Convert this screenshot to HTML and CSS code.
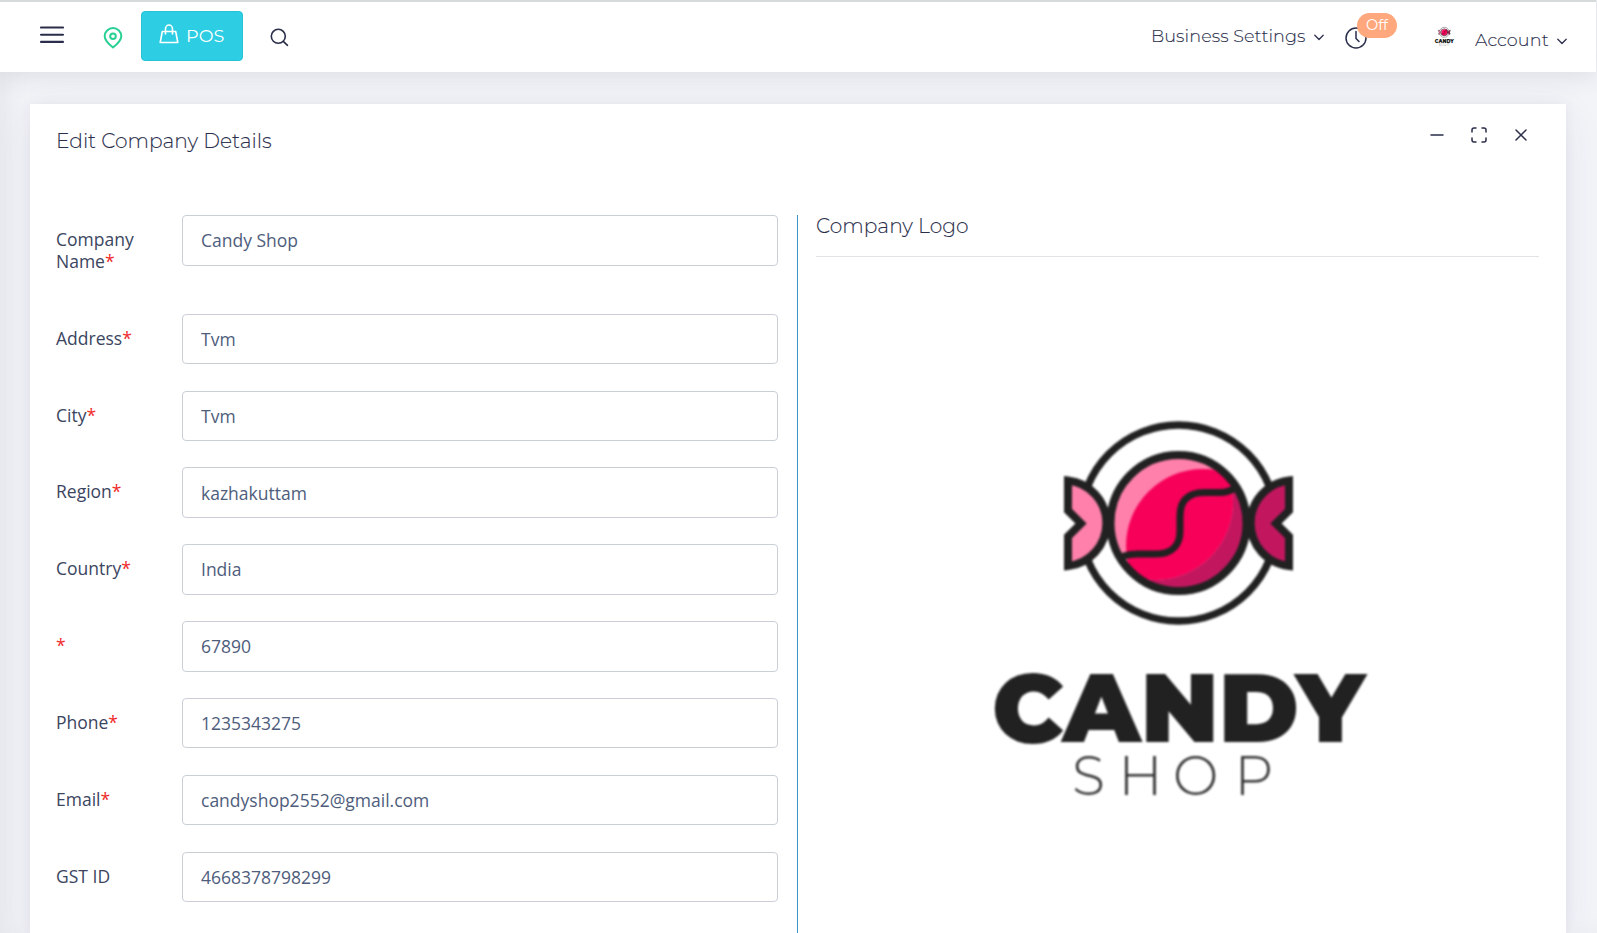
FILE: index.html
```html
<!DOCTYPE html>
<html lang="en">
<head>
<meta charset="utf-8">
<title>Edit Company Details</title>
<link rel="stylesheet" href="styles.css">
</head>
<body>
<svg class="defs" width="0" height="0">
  <defs>
    <clipPath id="candy-core"><circle cx="1155" cy="502" r="78"/></clipPath>
    <clipPath id="candy-ball"><circle cx="1178.5" cy="523" r="68"/></clipPath>
    <symbol id="candy-logo" viewBox="816 280 724 653">
      <g stroke="#212121" stroke-width="8" stroke-linejoin="miter">
        <circle cx="1178.5" cy="523" r="98" fill="none" stroke-width="7.5"/>
        <path d="M1068 480.500A43 43 0 0 1 1068 566V536.500L1081 523.500L1068 510.500Z" fill="#ff80ab"/>
        <path d="M1289 480.500A43 43 0 0 0 1289 566V536.500L1276 523.500L1289 510.500Z" fill="#c2175f"/>
      </g>
      <g clip-path="url(#candy-ball)">
        <rect x="1108" y="453" width="142" height="142" fill="#c2175f"/>
        <circle cx="1155" cy="502" r="78" fill="#ff80ab"/>
        <circle cx="1203" cy="546" r="77" fill="#f70059" clip-path="url(#candy-core)"/>
      </g>
      <circle cx="1178.500" cy="523" r="68" fill="none" stroke="#212121" stroke-width="8"/>
      <path d="M1124 556Q1130 554 1138 554H1156C1173 554 1180 544 1180 531V516C1180 502 1187 492.500 1204 492.500H1220Q1228 492.500 1235 488" fill="none" stroke="#212121" stroke-width="7"/>
      <text class="logo-candy" x="992" y="741.500" textLength="373" lengthAdjust="spacingAndGlyphs">CANDY</text>
      <text class="logo-shop" x="1072 1118.500 1173 1234.500" y="794.500">SHOP</text>
    </symbol>
  </defs>
</svg>

<header class="navbar">
  <div class="nav-left">
    <svg class="menu" viewBox="0 0 24 18"><path d="M1 1.500H23M1 8.700H23M1 15.900H23"/></svg>
    <svg class="pin" viewBox="0 0 20 22"><path d="M10 20.500C7.500 18.500 1.700 14 1.700 9.300A8.300 8.200 0 0 1 18.300 9.300C18.300 14 12.500 18.500 10 20.500Z"/><circle cx="10" cy="9.300" r="2.800"/></svg>
    <a class="pos" href="#">
      <svg viewBox="0 0 20 20"><path d="M3.300 7.500H16.700L18.800 18.500H1.200ZM6.500 10V5A3.500 4 0 0 1 13.500 5V10"/></svg>
      <span>POS</span>
    </a>
    <svg class="search" viewBox="0 0 19 19"><circle cx="8.300" cy="8.300" r="7"/><path d="M13.300 13.300L17.500 17.300"/></svg>
  </div>
  <div class="nav-right">
    <a class="business" href="#"><span>Business Settings</span><svg class="chev" viewBox="0 0 10 7"><path d="M.8 1.200L5 5.500L9.200 1.200"/></svg></a>
    <div class="clock">
      <svg viewBox="0 0 22 22"><circle cx="11" cy="11" r="10"/><path d="M11 4.500V11.500L14 14.500"/></svg>
      <span class="badge">Off</span>
    </div>
    <svg class="avatar" viewBox="140 120 450 410"><use href="#candy-logo" width="724" height="653"/></svg>
    <a class="account" href="#"><span>Account</span><svg class="chev" viewBox="0 0 10 7"><path d="M.8 1.200L5 5.500L9.200 1.200"/></svg></a>
  </div>
</header>

<main class="card">
  <div class="card-head">
    <h1>Edit Company Details</h1>
    <div class="tools">
      <svg viewBox="0 0 16 16"><path d="M2 8H14"/></svg>
      <svg viewBox="0 0 16 16"><path d="M1 5V3Q1 1 3 1H5M11 1H13Q15 1 15 3V5M15 11V13Q15 15 13 15H11M5 15H3Q1 15 1 13V11"/></svg>
      <svg viewBox="0 0 16 16"><path d="M3 3L13 13M13 3L3 13"/></svg>
    </div>
  </div>
  <div class="columns">
    <form class="fields">
      <div class="row tall"><label>Company Name<b>*</b></label><input value="Candy Shop"></div>
      <div class="row"><label>Address<b>*</b></label><input value="Tvm"></div>
      <div class="row"><label>City<b>*</b></label><input value="Tvm"></div>
      <div class="row"><label>Region<b>*</b></label><input value="kazhakuttam"></div>
      <div class="row"><label>Country<b>*</b></label><input value="India"></div>
      <div class="row"><label><b>*</b></label><input value="67890"></div>
      <div class="row"><label>Phone<b>*</b></label><input value="1235343275"></div>
      <div class="row"><label>Email<b>*</b></label><input value="candyshop2552@gmail.com"></div>
      <div class="row"><label>GST ID</label><input value="4668378798299"></div>
    </form>
    <section class="logo-panel">
      <h2>Company Logo</h2>
      <svg class="logo" viewBox="0 0 724 653"><use href="#candy-logo" width="724" height="653"/></svg>
    </section>
  </div>
</main>
</body>
</html>
```
FILE: styles.css
```css
* { box-sizing: border-box; }
body {
  margin: 0;
  height: 933px;
  overflow: hidden;
  background: #f3f4f8;
  box-shadow: inset 14px 0 24px -8px rgba(60, 60, 80, .08);
  font-family: "Open Sans", sans-serif;
  font-size: 17.5px;
  color: #404e67;
}
.defs { position: absolute; }
svg { display: block; fill: none; stroke-linecap: round; stroke-linejoin: round; flex: none; }
a { color: inherit; text-decoration: none; }

.navbar {
  display: flex;
  justify-content: space-between;
  height: 72px;
  margin-right: 1px;
  border-top: 2px solid #d6dadb;
  background: #fff;
  box-shadow: 0 2px 26px 1px rgba(49, 53, 72, .12);
  font-family: Montserrat, Inter, sans-serif;
  font-weight: 300;
  font-size: 17.6px;
}
.nav-left, .nav-right { display: flex; align-items: flex-start; }
.nav-left { padding-left: 40px; }
.menu { width: 24px; height: 18px; margin-top: 24px; stroke: #2a2e4a; stroke-width: 2.1; }
.pin { width: 20px; height: 22px; margin: 25px 0 0 39px; stroke: #28d094; stroke-width: 2; }
.pos {
  display: flex;
  gap: 7px;
  width: 102px;
  height: 50px;
  margin: 9px 0 0 18px;
  padding: 12px 0 0 17px;
  border: 1px solid #28c3d7;
  border-radius: 4px;
  background: #2dcee3;
  color: #fff;
  font-weight: 400;
  line-height: 24px;
}
.pos svg { width: 20px; height: 20px; stroke: #fff; stroke-width: 1.6; }
.search { width: 19px; height: 19px; margin: 26px 0 0 27px; stroke: #2a2e4a; stroke-width: 1.6; }

.nav-right { padding-right: 29px; color: #2b2f4c; }
.business span, .account span, h1, h2 { -webkit-text-stroke: .1px currentColor; }
.business, .account { display: flex; line-height: 24px; white-space: nowrap; }
.business { margin-top: 22px; }
.business span { width: 163px; letter-spacing: .06px; }
.account { margin-top: 26px; }
.account span { width: 82px; letter-spacing: .1px; }
.chev { width: 10px; height: 7px; margin-top: 10px; stroke: #2f3350; stroke-width: 1.3; }
.clock { position: relative; width: 22px; margin: 25px 0 0 21px; }
.clock svg { width: 22px; height: 22px; stroke: #2a2e4a; stroke-width: 1.5; }
.badge {
  position: absolute;
  left: 12px;
  top: -14px;
  width: 40px;
  height: 25px;
  border-radius: 13px;
  background: #ffa87d;
  color: #fff;
  font-size: 14.5px;
  font-weight: 400;
  line-height: 24px;
  text-align: center;
}
.avatar { width: 23px; height: 21px; margin: 24px 19px 0 66px; }

.card {
  width: 1536px;
  height: 829px;
  margin: 32px 0 0 30px;
  padding: 0 26px;
  background: #fff;
  box-shadow: 0 10px 40px rgba(62, 57, 107, .07), 0 0 12px rgba(62, 57, 107, .06);
}
.card-head { display: flex; justify-content: space-between; height: 111px; }
h1, h2 {
  margin: 0;
  font-family: Montserrat, Inter, sans-serif;
  font-weight: 300;
  font-size: 20.2px;
  line-height: 24px;
  color: #2b2f4c;
  white-space: nowrap;
}
h1 { padding-top: 25px; }
h2 { height: 42px; margin-right: 1px; line-height: 21px; border-bottom: 1px solid #e0e2e6; }
.tools { display: flex; gap: 26px; padding: 23px 11px 0 0; }
.tools svg { width: 16px; height: 16px; stroke: #2a2e4a; stroke-width: 1.5; }
.columns { display: grid; grid-template-columns: 741px 743px; height: 718px; }
.row { display: grid; grid-template-columns: 126px 596px; align-items: start; height: 76.85px; }
.row.tall { height: 98.7px; }
label { width: 100px; padding-top: 13px; line-height: 22px; color: #3b4560; }
label b { color: #f02a2a; font-weight: 400; }
input {
  width: 596px;
  height: 50.500px;
  padding: 0 18px;
  border: 1px solid #cacfd7;
  border-radius: 4px;
  background: #fff;
  color: #4e5d7c;
  font: 17.5px "Open Sans", sans-serif;
}
.logo-panel { border-left: 1px solid #3d94c6; padding-left: 18px; }
.logo { width: 724px; height: 653px; margin-top: 23px; filter: blur(.8px); }
.logo-candy { font: 900 96.500px Montserrat, Inter, sans-serif; fill: #212121; }
.logo-shop { font: 300 54px Montserrat, Inter, sans-serif; fill: #333; }
```
